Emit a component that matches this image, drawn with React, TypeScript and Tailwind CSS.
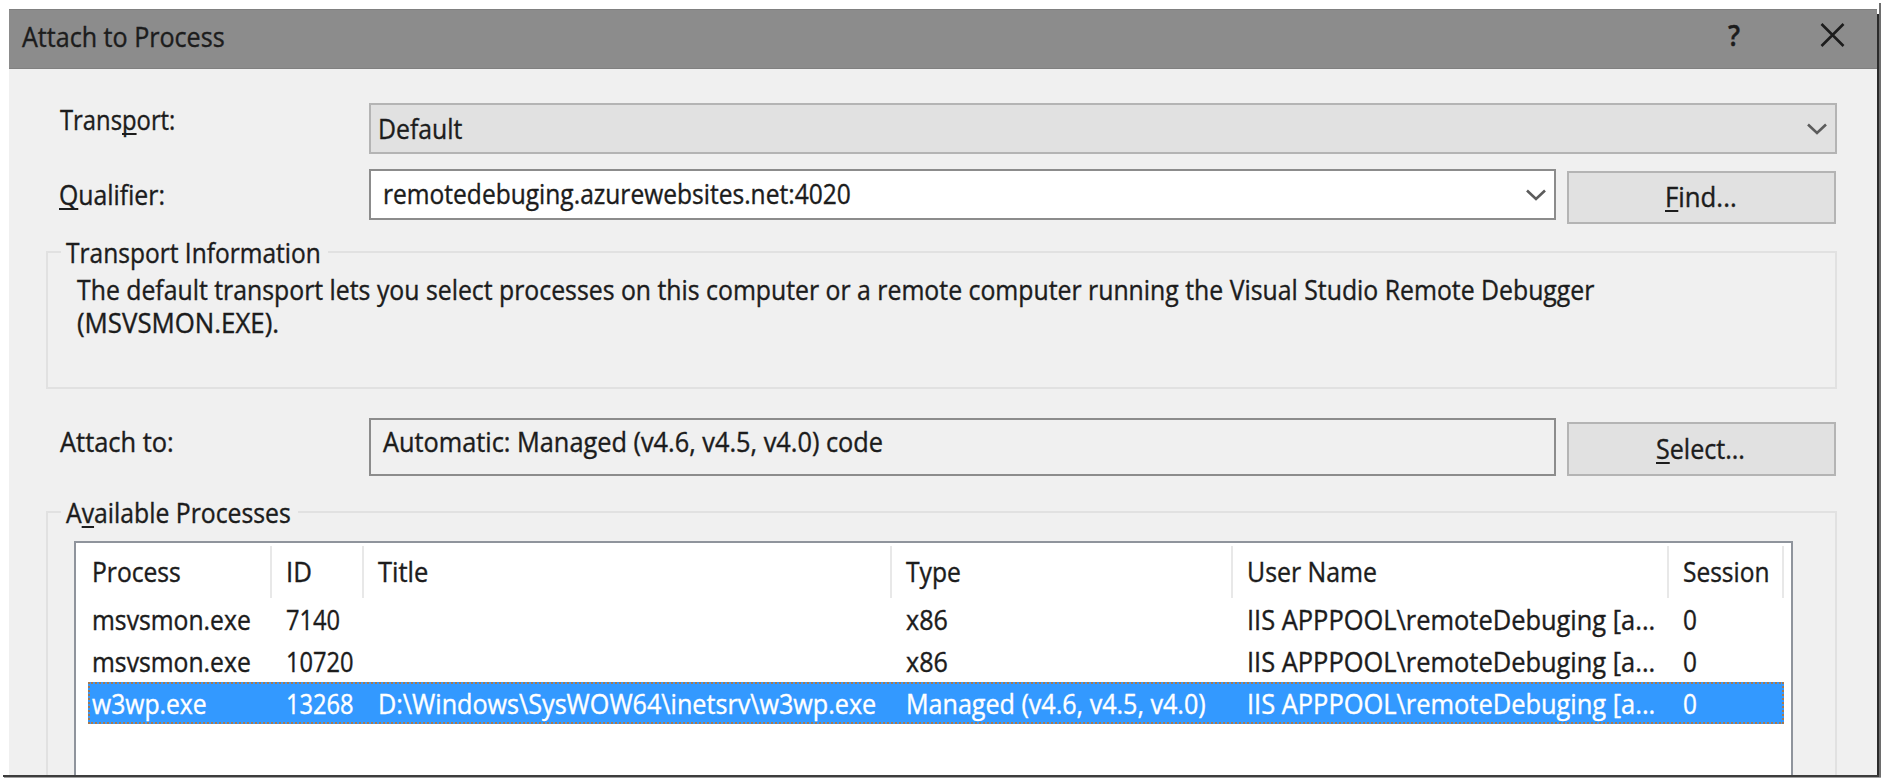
import React from 'react'
import clsx from 'clsx'

const columns = [
  { name: 'Process', scale: 'scale-x-[0.88]' },
  { name: 'ID', scale: 'scale-x-[0.92]' },
  { name: 'Title', scale: 'scale-x-[0.91]' },
  { name: 'Type', scale: 'scale-x-[0.88]' },
  { name: 'User Name', scale: 'scale-x-[0.888]' },
  { name: 'Session', scale: 'scale-x-[0.875]' },
]

const cellScales = [
  'scale-x-[0.882]',
  'scale-x-[0.845]',
  'scale-x-[0.898]',
  'scale-x-[0.896]',
  'scale-x-[0.908]',
  'scale-x-[0.87]',
]

const processes = [
  { cells: ['msvsmon.exe', '7140', '', 'x86', 'IIS APPPOOL\\remoteDebuging [a...', '0'] },
  { cells: ['msvsmon.exe', '10720', '', 'x86', 'IIS APPPOOL\\remoteDebuging [a...', '0'] },
  {
    cells: [
      'w3wp.exe',
      '13268',
      'D:\\Windows\\SysWOW64\\inetsrv\\w3wp.exe',
      'Managed (v4.6, v4.5, v4.0)',
      'IIS APPPOOL\\remoteDebuging [a...',
      '0',
    ],
    selected: true,
  },
]

const grid = 'grid grid-cols-[184px_92px_528px_341px_436px_115px]'

// Narrowed text, close to the Windows dialog font
const Text = ({ className, children }: { className?: string; children: React.ReactNode }) => (
  <span className={clsx('block w-max origin-left whitespace-nowrap', className)}>{children}</span>
)

// Underlined access key
const Key = ({ children }: { children: React.ReactNode }) => (
  <span className="underline decoration-2 underline-offset-[3px] [text-decoration-skip-ink:none]">
    {children}
  </span>
)

const Chevron = () => (
  <svg className="h-3 w-5" viewBox="0 0 20 12" fill="none" stroke="#5c5c5c" strokeWidth="2.6">
    <path d="M1 1.5 L10 10 L19 1.5" />
  </svg>
)

const App = () => {
  return (
    <div
      className="relative h-[779px] w-[1883px] overflow-hidden bg-white pt-[9px] pl-[9px] text-[28px] leading-8 text-[#1c1c1c] [-webkit-text-stroke-width:0.4px]"
      style={{ fontFamily: '"Open Sans", "Noto Sans", sans-serif' }}
    >
      <div className="h-[766px] w-[1868px] bg-[#f0f0f0]">
        {/* Title bar */}
        <div className="flex h-[60px] border-y border-[#808080] bg-[#8c8c8c] pl-[13px]">
          <Text className="mt-[10px] scale-x-[0.896]">Attach to Process</Text>
          <div className="ml-auto flex">
            <Text className="mt-[9px] mr-[79px] scale-x-[0.95] font-semibold">?</Text>
            <svg className="mt-[13px] mr-[32px] h-6 w-[25px]" viewBox="0 0 25 24" stroke="#1c1c1c" strokeWidth="2.6">
              <path d="M1.5 1 L23.5 23 M23.5 1 L1.5 23" />
            </svg>
          </div>
        </div>

        <div className="pt-[34px] pl-[37px]">
          <div className="flex h-[66px] items-start">
            <div className="w-[323px] pl-[14px]">
              <Text className="scale-x-[0.85]">
                Trans<Key>p</Key>ort:
              </Text>
            </div>
            <div className="flex h-[51px] w-[1468px] items-center justify-between border-2 border-[#b4b4b4] bg-[#e1e1e1] pr-[8px] pl-[7px]">
              <Text className="-mt-px scale-x-[0.885]">Default</Text>
              <Chevron />
            </div>
          </div>

          <div className="flex h-[82px] items-start">
            <div className="w-[323px] pl-[13px]">
              <Text className="mt-[9px] scale-x-[0.885]">
                <Key>Q</Key>ualifier:
              </Text>
            </div>
            <div className="flex h-[51px] w-[1187px] items-center justify-between border-2 border-[#8c8c8c] bg-white pr-[8px] pl-[12px]">
              <Text className="-mt-[4px] scale-x-[0.877]">remotedebuging.azurewebsites.net:4020</Text>
              <Chevron />
            </div>
            <button className="mt-[2px] ml-[11px] flex h-[53px] w-[269px] justify-center border-2 border-[#b4b4b4] bg-[#e1e1e1] pt-[7px] pl-[4px]">
              <Text className="origin-center scale-x-[0.92]">
                <Key>F</Key>ind...
              </Text>
            </button>
          </div>

          <div className="h-[138px] w-[1791px] border-2 border-[#e1e1e1] pl-[13px]">
            <div className="-mt-[17px] h-8 w-[267px] bg-[#f0f0f0] pl-[5px]">
              <Text className="scale-x-[0.876]">Transport Information</Text>
            </div>
            <div className="mt-[5px] pl-[16px]">
              <Text className="scale-x-[0.886]">
                The default transport lets you select processes on this computer or a remote computer running the Visual
                Studio Remote Debugger
              </Text>
              <Text className="mt-px scale-x-[0.922]">(MSVSMON.EXE).</Text>
            </div>
          </div>

          <div className="mt-[29px] flex h-[93px] items-start">
            <div className="w-[323px] pl-[14px]">
              <Text className="mt-[7px] scale-x-[0.908]">Attach to:</Text>
            </div>
            <div className="h-[58px] w-[1187px] border-2 border-[#8c8c8c] bg-[#f0f0f0] pt-[5px] pl-[12px]">
              <Text className="scale-x-[0.904]">Automatic: Managed (v4.6, v4.5, v4.0) code</Text>
            </div>
            <button className="mt-[4px] ml-[11px] flex h-[54px] w-[269px] justify-center border-2 border-[#b4b4b4] bg-[#e1e1e1] pt-[8px] pl-[8px]">
              <Text className="origin-center scale-x-[0.895]">
                <Key>S</Key>elect...
              </Text>
            </button>
          </div>

          <div className="h-[264px] w-[1791px] border-2 border-b-0 border-[#e1e1e1] pl-[13px]">
            <div className="-mt-[17px] h-8 w-[237px] bg-[#f0f0f0] pl-[5px]">
              <Text className="scale-x-[0.884]">
                A<Key>v</Key>ailable Processes
              </Text>
            </div>
            <div className="mt-[13px] ml-[13px] h-[234px] w-[1719px] border-2 border-b-0 border-[#8f949c] bg-white pt-[3px] pl-[12px]">
              <div className={grid}>
                {columns.map((col, i) => (
                  <div
                    key={col.name}
                    className={clsx('h-[52px] border-r-2 border-[#e8e8e8] pt-[9px]', i === 0 ? 'pl-[4px]' : 'pl-[14px]')}
                  >
                    <Text className={col.scale}>{col.name}</Text>
                  </div>
                ))}
              </div>
              {processes.map((proc, row) => (
                <div
                  key={row}
                  className={clsx(
                    grid,
                    'h-[42px] w-[1696px] border-2 border-dotted',
                    proc.selected ? 'border-[#a8794e] bg-[#3399ff] text-white' : 'border-transparent'
                  )}
                >
                  {proc.cells.map((cell, i) => (
                    <div key={i} className={clsx('pt-[3px]', i === 0 ? 'pl-[2px]' : 'pl-[12px]')}>
                      <Text className={cellScales[i]}>{cell}</Text>
                    </div>
                  ))}
                </div>
              ))}
            </div>
          </div>
        </div>
      </div>

      {/* Drop shadow edges */}
      <div className="absolute top-[3px] right-[2px] h-[774px] w-[2px] bg-[#6e6e6e]" />
      <div className="absolute top-[14px] right-[4px] h-[763px] w-[2px] bg-[#2b2b2b]" />
      <div className="absolute bottom-[2px] left-[3px] h-[2px] w-[1876px] bg-[#3c3c3c]" />
      <div className="absolute bottom-px left-[4px] h-px w-[1877px] bg-[#a0a0a0]" />
    </div>
  )
}

export default App
